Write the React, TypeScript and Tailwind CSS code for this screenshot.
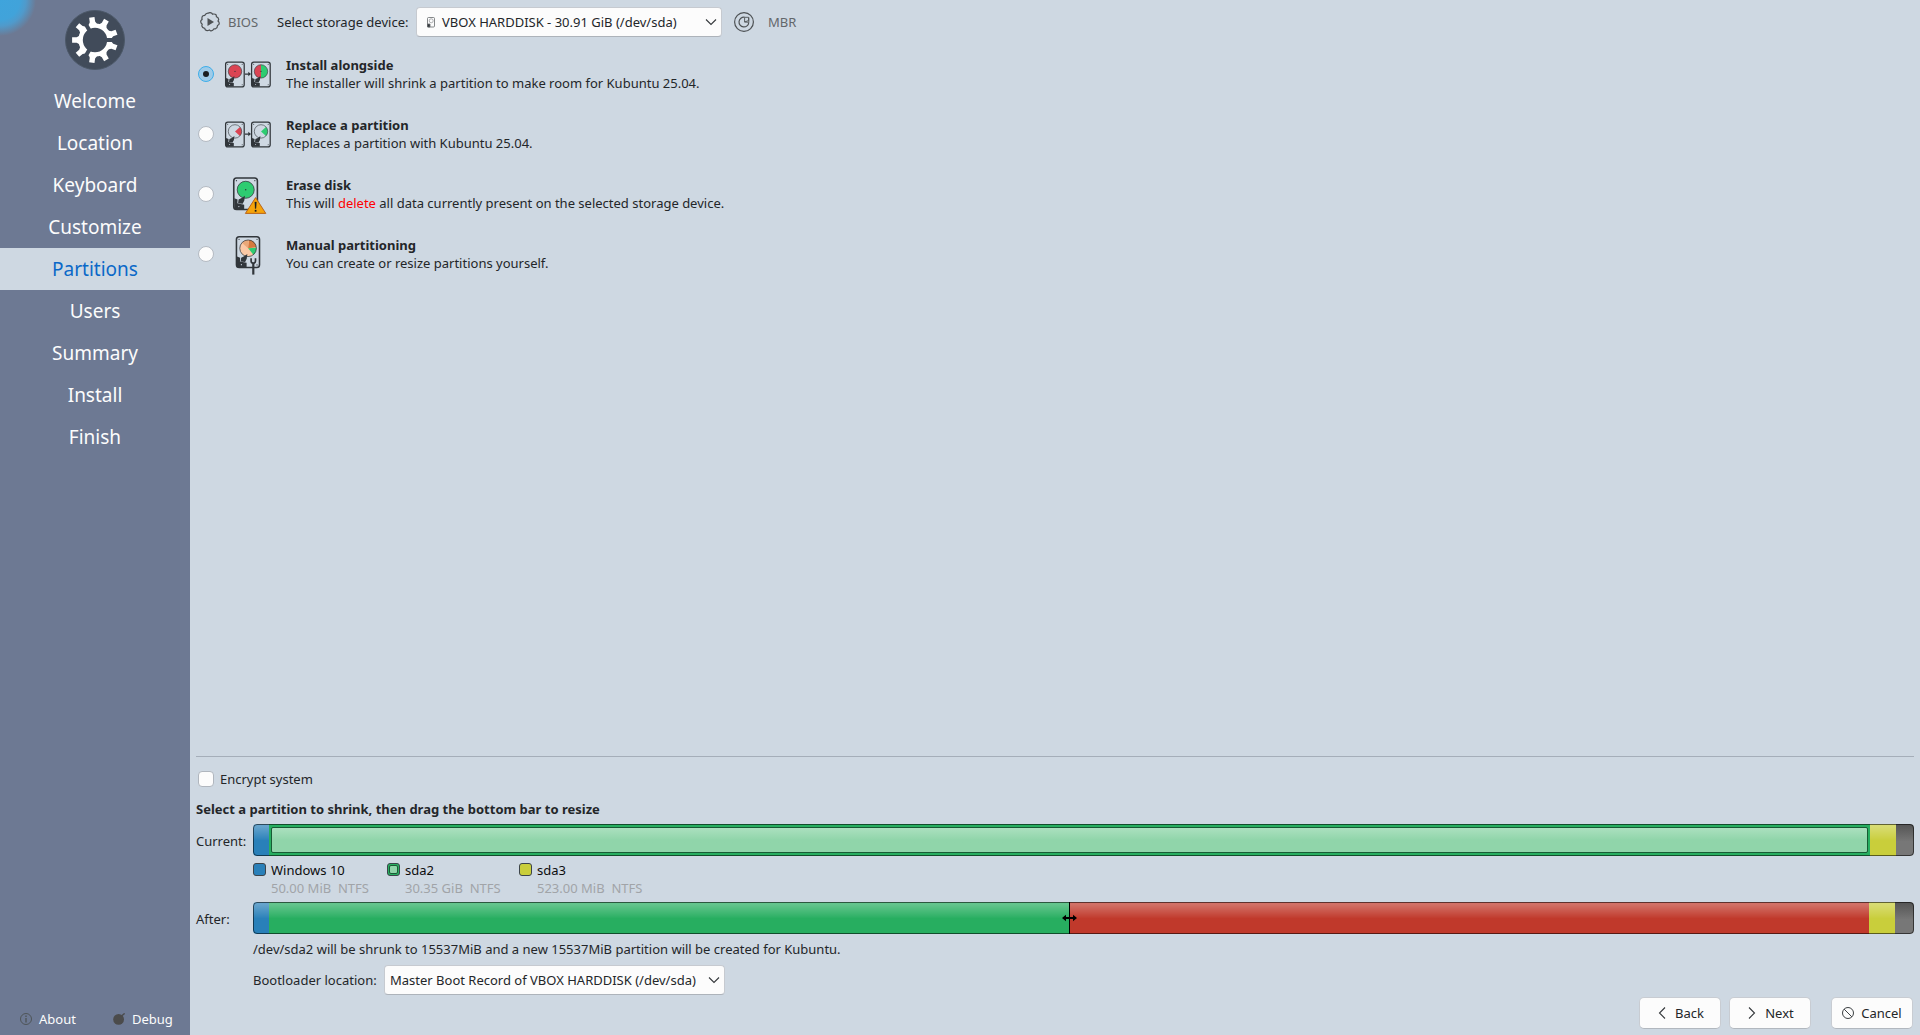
import React from "react";

const INK = "#31363b";

/* Hard disk body with its read arm; the platter is passed as children. */
function Disk({ x, y, s = 1, children }: { x: number; y: number; s?: number; children: React.ReactNode }) {
  return (
    <g transform={`translate(${x} ${y}) scale(${s})`}>
      <rect x="0.6" y="0.6" width="18.6" height="24.8" rx="2.2" fill="none" stroke={INK} strokeWidth="1.25" />
      <circle cx="2.7" cy="2.7" r="0.5" fill={INK} />
      <circle cx="17.2" cy="2.7" r="0.5" fill={INK} />
      <circle cx="17.2" cy="23.3" r="0.5" fill={INK} />
      {children}
      <circle cx="10" cy="9.9" r="6.7" fill="none" stroke={INK} strokeWidth="0.6" />
      <path d="M1 16.5 L3.6 17.5 L3.4 20.5 L8.8 21.6 V25 H1 Z" fill={INK} />
      <path d="M9.4 14.6 L8.9 18.4 L7.6 21 L4 20.6 L4.4 17.6 L6.8 16.4 Z" fill={INK} />
      <circle cx="4.6" cy="23.1" r="0.5" fill="#ced8e2" />
    </g>
  );
}

function Arrow() {
  return <path d="M21 23.5 H24.3 V21.7 L27 24 L24.3 26.3 V24.7 H21 Z" fill={INK} />;
}

function AlongsideIcon() {
  return (
    <svg width="48" height="48" viewBox="0 0 48 48">
      <Disk x={1} y={11.5}>
        <circle cx="10" cy="9.9" r="6.7" fill="#da4453" />
        <circle cx="10" cy="9.9" r="0.6" fill={INK} />
      </Disk>
      <Arrow />
      <Disk x={27} y={11.5}>
        <path d="M10 3.2 A6.7 6.7 0 0 0 10 16.6 Z" fill="#da4453" />
        <path d="M10 3.2 A6.7 6.7 0 0 1 10 16.6 Z" fill="#2ecc71" />
        <circle cx="10" cy="9.9" r="0.6" fill={INK} />
      </Disk>
    </svg>
  );
}

function ReplaceIcon() {
  return (
    <svg width="48" height="48" viewBox="0 0 48 48">
      <Disk x={1} y={11.5}>
        <path d="M10 9.9 L15 5.4 A6.7 6.7 0 0 1 15 14.4 Z" fill="#da4453" />
      </Disk>
      <Arrow />
      <Disk x={27} y={11.5}>
        <path d="M10 9.9 L15 5.4 A6.7 6.7 0 0 1 15 14.4 Z" fill="#2ecc71" />
      </Disk>
    </svg>
  );
}

function EraseIcon() {
  return (
    <svg width="48" height="48" viewBox="0 0 48 48">
      <Disk x={9} y={7.2} s={1.27}>
        <circle cx="10" cy="9.9" r="6.7" fill="#2ecc71" />
        <circle cx="10" cy="9.9" r="0.6" fill={INK} />
      </Disk>
      <path d="M31.6 27.6 L41.8 43.4 H21.4 Z" fill="#f6a40a" stroke="#b35a10" strokeWidth="0.9" strokeLinejoin="round" />
      <path d="M30.8 32 H32.4 L32 38.5 H31.2 Z M30.9 40 H32.3 V41.5 H30.9 Z" fill="#1b1e20" stroke="#1b1e20" strokeWidth="0.3" />
    </svg>
  );
}

function ManualIcon() {
  return (
    <svg width="48" height="48" viewBox="0 0 48 48">
      <Disk x={11.7} y={6} s={1.24}>
        <circle cx="10" cy="9.9" r="6.7" fill="#fbc9a5" />
        <path d="M10 9.9 L5 5.4 A6.7 6.7 0 0 1 10.5 3.2 Z" fill="#e9a878" />
        <path d="M10 9.9 L10.8 3.2 A6.7 6.7 0 0 1 16.6 9 Z" fill="#d5793d" />
        <path d="M10 9.9 L16.7 9.4 A6.7 6.7 0 0 1 14.3 15.1 Z" fill="#2ecc71" />
      </Disk>
      <path d="M27.1 28.3 V31 Q27.1 33.2 29.3 33.2 Q31.5 33.2 31.5 31 V28.3" fill="none" stroke={INK} strokeWidth="1.7" />
      <path d="M29.3 33 V44.6" stroke={INK} strokeWidth="2.2" />
    </svg>
  );
}

const teeth = [-98, -60, -20, 20, 60, 98, 140, 180, 220];

function Logo() {
  return (
    <svg width="60" height="60" viewBox="0 0 60 60">
      <circle cx="30" cy="30" r="29.5" fill="#414b5a" stroke="#4c5868" strokeWidth="1" />
      <circle cx="30" cy="30" r="14.4" fill="none" stroke="#fff" strokeWidth="4.4" />
      {teeth.map((a) => (
        <path key={a} transform={`rotate(${a} 30 30)`} d="M45 25.4 L48.4 27.3 L52.9 27.3 V32.7 L48.4 32.7 L45 34.6 Z" fill="#fff" />
      ))}
      {[0, 120, 240].map((a) => (
        <path key={a} transform={`rotate(${a} 30 30)`} d="M41 28 H50 V32 H41 Z" fill="#414b5a" />
      ))}
    </svg>
  );
}

function Chevron({ d, w = 12 }: { d: string; w?: number }) {
  return (
    <svg width={w} height="12" viewBox={`0 0 ${w} 12`} fill="none" stroke="#34383b" strokeWidth="1.1">
      <path d={d} />
    </svg>
  );
}

const steps = ["Welcome", "Location", "Keyboard", "Customize", "Partitions", "Users", "Summary", "Install", "Finish"];

function Sidebar() {
  return (
    <aside className="relative flex w-[190px] shrink-0 flex-col overflow-hidden bg-[#6d7993] text-[#fcfcfc]">
      <div className="absolute -left-[36px] -top-[36px] h-[72px] w-[72px] rounded-full bg-[radial-gradient(closest-side,#3fa4dc_0%,#41a3da_55%,#509acb_72%,#6d799300_100%)]" />
      <div className="flex h-20 justify-center pt-[10px]"><Logo /></div>
      <nav className="flex flex-col text-[19px]">
        {steps.map((s) => (
          <div
            key={s}
            className={s === "Partitions"
              ? "flex h-[42px] items-center justify-center bg-[#ced8e2] text-[#0a68c8]"
              : "flex h-[42px] items-center justify-center"}
          >
            {s}
          </div>
        ))}
      </nav>
      <div className="mt-auto flex h-8 items-center pb-px">
        <svg className="ml-5 shrink-0" width="12" height="12" viewBox="0 0 12 12" fill="none" stroke="#4f5558">
          <circle cx="6" cy="6" r="5.5" />
          <path d="M6 5v4.5M6 2.5v1.4" strokeWidth="1.4" />
        </svg>
        <span className="ml-[7px] w-[74px]">About</span>
        <svg className="shrink-0" width="12" height="12" viewBox="0 0 12 12">
          <circle cx="5.6" cy="6.4" r="5.4" fill="#4b4b4b" />
          <path d="M8 3.5 L11.6 0.4" stroke="#4b4b4b" strokeWidth="1.4" />
        </svg>
        <span className="ml-[7px]">Debug</span>
      </div>
    </aside>
  );
}

function Toolbar() {
  return (
    <div className="flex h-11 items-center pl-[10px]">
      <svg width="20" height="20" viewBox="0 0 20 20" fill="none" stroke="#4d5154" strokeWidth="1.2">
        <path d="M8.2 1.2 Q10 0 11.8 1.2 L12.5 2.2 Q15 1.6 16.2 3 L16.4 4.6 Q18.7 5.5 18.7 7.6 L18 9 Q19.8 10.5 18.9 12.4 L17.5 13.5 Q17.5 16 15.5 16.8 L14 16.8 Q12.7 19.3 10.5 18.8 L9.3 18 Q7 19.4 5.3 17.8 L4.7 16.3 Q2.2 16 1.8 13.9 L2.2 12.3 Q0.2 10.7 0.9 8.7 L2.1 7.5 Q1.4 5 3 3.7 L4.7 3.4 Q6 1 8.2 1.2 Z" />
        <path d="M7.5 6 V14 L14 10 Z" fill="#4d5154" stroke="none" />
      </svg>
      <span className="ml-[8px] w-[49px] text-[#63676b]">BIOS</span>
      <span className="w-[132px] whitespace-nowrap">Select storage device:</span>
      <div className="ml-[7px] flex h-[30px] w-[306px] items-center rounded-[4px] border border-[#c6cad0] border-b-[#adb3ba] bg-[#fcfcfc] pl-[10px]">
        <svg width="8" height="11" viewBox="0 0 8 11" fill="none" stroke="#66696c" strokeWidth="0.8">
          <rect x="0.5" y="0.5" width="7" height="9.5" rx="1" />
          <circle cx="4.2" cy="3.8" r="2" strokeWidth="0.5" />
          <path d="M0.5 7 H3 V10 H0.5 Z" fill="#31363b" />
        </svg>
        <span className="ml-[7px] grow">VBOX HARDDISK - 30.91 GiB (/dev/sda)</span>
        <span className="mr-1"><Chevron d="M1 3.5 L6 8.5 L11 3.5" /></span>
      </div>
      <svg className="ml-[12px]" width="20" height="20" viewBox="0 0 20 20" fill="none" stroke="#4d5154" strokeWidth="1.2">
        <circle cx="10" cy="10" r="9.4" />
        <path d="M10.5 5.2 A4.9 4.9 0 1 0 14.8 10.5" />
        <path d="M10.6 10 V5.3 H14.6 V8.5 L10.6 10 Z M10.6 10 L14.8 10.3 V5.5" strokeWidth="0.9" />
      </svg>
      <span className="ml-[14px] text-[#63676b]">MBR</span>
    </div>
  );
}

const options: { title: string; body: React.ReactNode; icon: React.ReactNode; on?: boolean }[] = [
  { title: "Install alongside", body: "The installer will shrink a partition to make room for Kubuntu 25.04.", icon: <AlongsideIcon />, on: true },
  { title: "Replace a partition", body: "Replaces a partition with Kubuntu 25.04.", icon: <ReplaceIcon /> },
  {
    title: "Erase disk",
    body: <>This will <span className="text-[#ff0000]">delete</span> all data currently present on the selected storage device.</>,
    icon: <EraseIcon />,
  },
  { title: "Manual partitioning", body: "You can create or resize partitions yourself.", icon: <ManualIcon /> },
];

function Options() {
  return (
    <div className="flex flex-col">
      {options.map((o) => (
        <div key={o.title} className="flex h-[60px] items-center pl-2">
          <span
            className={o.on
              ? "flex size-4 items-center justify-center rounded-full border border-[#3daee9] bg-[#9fcbe8]"
              : "size-4 rounded-full border border-[#b4bac2] bg-[#fcfcfc]"}
          >
            {o.on && <span className="size-[6px] rounded-full bg-[#1b1e20]" />}
          </span>
          <span className="ml-[10px]">{o.icon}</span>
          <div className="ml-[14px] leading-[18px]">
            <div className="font-bold">{o.title}</div>
            <div>{o.body}</div>
          </div>
        </div>
      ))}
    </div>
  );
}

const gloss = "bg-linear-to-b from-white/28 from-8% via-white/5 via-45% to-transparent to-52%";

function Tail({ yellow, grey }: { yellow: string; grey: string }) {
  return (
    <>
      <div className={yellow}><div className={"h-full " + gloss} /></div>
      <div className={grey} />
    </>
  );
}

function CurrentBar() {
  return (
    <div className="relative flex h-8 w-[1661px] overflow-hidden rounded-[4px]">
      <div className="w-4 bg-[#2980b9]"><div className={"h-full " + gloss} /></div>
      <div className="grow bg-[#27ae60] px-[2px] py-[3px]">
        <div className="h-[26px] rounded-[2px] border border-[#175c34] bg-linear-to-b from-[#abe0bf] to-[#90d5aa] to-50%" />
      </div>
      <Tail yellow="w-[26px] bg-[#c9ce3b]" grey="w-[18px] bg-linear-to-b from-[#545454] to-[#777777] to-55%" />
      <div className="absolute inset-0 rounded-[4px] border border-black/55" />
    </div>
  );
}

function AfterBar() {
  return (
    <div className="relative flex h-8 w-[1661px] overflow-hidden rounded-[4px]">
      <div className="w-4 bg-[#2980b9]"><div className={"h-full " + gloss} /></div>
      <div className="w-[800px] bg-[#27ae60]"><div className={"h-full " + gloss} /></div>
      <div className="w-px bg-black" />
      <div className="grow bg-[#c0392b]"><div className={"h-full " + gloss} /></div>
      <Tail yellow="w-[26px] bg-[#c9ce3b]" grey="w-[19px] bg-linear-to-b from-[#545454] to-[#777777] to-55%" />
      <div className="absolute inset-0 rounded-[4px] border border-black/55" />
      <svg className="absolute left-[809px] top-[12px]" width="15" height="8" viewBox="0 0 15 8">
        <path d="M0 4 L4 0.8 V3 H11 V0.8 L15 4 L11 7.2 V5 H4 V7.2 Z" fill="#000" />
      </svg>
    </div>
  );
}

const legend = [
  { name: "Windows 10", size: "50.00 MiB  NTFS", box: "bg-[#2980b9]", w: "w-[134px]" },
  { name: "sda2", size: "30.35 GiB  NTFS", box: "bg-[#27ae60]", w: "w-[132px]", inner: true },
  { name: "sda3", size: "523.00 MiB  NTFS", box: "bg-[#c9ce3b]", w: "w-[140px]" },
];

function Legend() {
  return (
    <div className="flex h-[46px] pl-[57px] pt-[5px]">
      {legend.map((l) => (
        <div key={l.name} className={"flex shrink-0 " + l.w}>
          <div className={"mt-[2px] flex size-[13px] items-center justify-center rounded-[3px] border border-[#3c444b] " + l.box}>
            {l.inner && <div className="size-[9px] shrink-0 rounded-[2px] border border-[#175c34] bg-[#90d5aa]" />}
          </div>
          <div className="ml-[5px] whitespace-pre leading-[18px]">
            <div className="text-[#0c0d0e]">{l.name}</div>
            <div className="text-[#a1a4a8]">{l.size}</div>
          </div>
        </div>
      ))}
    </div>
  );
}

function Button({ label, icon }: { label: string; icon: React.ReactNode }) {
  return (
    <button className="flex h-8 w-[82px] items-center justify-center gap-[7px] rounded-[5px] border border-[#c8ccd2] border-b-[#b2b8bf] bg-[#fcfcfc]">
      {icon}
      <span>{label}</span>
    </button>
  );
}

export default function App() {
  return (
    <div className="flex h-[1035px] w-[1920px] overflow-hidden bg-[#ced8e2] font-['Noto_Sans',sans-serif] text-[13px] leading-[18px] text-[#232629]">
      <Sidebar />
      <main className="flex grow flex-col">
        <Toolbar />
        <Options />
        <div className="mt-auto flex flex-col pl-[6px]">
          <div className="h-px w-[1718px] bg-[#a5aeb9]" />
          <label className="mt-[14px] flex h-4 items-center pl-[2px]">
            <span className="size-4 rounded-[4px] border border-[#b0b6be] bg-[#fcfcfc]" />
            <span className="ml-[6px]">Encrypt system</span>
          </label>
          <div className="mt-[13px] h-6 font-bold">Select a partition to shrink, then drag the bottom bar to resize</div>
          <div className="flex items-center">
            <span className="w-[57px] pt-[2px]">Current:</span>
            <CurrentBar />
          </div>
          <Legend />
          <div className="flex items-center">
            <span className="w-[57px] pt-[2px]">After:</span>
            <AfterBar />
          </div>
          <div className="mt-[6px] pl-[57px]">/dev/sda2 will be shrunk to 15537MiB and a new 15537MiB partition will be created for Kubuntu.</div>
          <div className="mt-[7px] flex h-[30px] items-center pl-[57px]">
            <span className="w-[123px] whitespace-nowrap">Bootloader location:</span>
            <div className="ml-2 flex h-[30px] w-[341px] items-center rounded-[4px] border border-[#c6cad0] border-b-[#adb3ba] bg-[#fcfcfc] pl-[5px]">
              <span className="grow">Master Boot Record of VBOX HARDDISK (/dev/sda)</span>
              <span className="mr-1"><Chevron d="M1 3.5 L6 8.5 L11 3.5" /></span>
            </div>
          </div>
          <div className="mt-[2px] flex h-[38px] justify-end pr-[7px]">
            <Button label="Back" icon={<Chevron d="M9 0.5 L3.5 6 L9 11.5" />} />
            <span className="w-2" />
            <Button label="Next" icon={<Chevron d="M3 0.5 L8.5 6 L3 11.5" />} />
            <span className="w-5" />
            <Button
              label="Cancel"
              icon={
                <svg width="12" height="12" viewBox="0 0 12 12" fill="none" stroke="#3c4043" strokeWidth="1">
                  <circle cx="6" cy="6" r="5.5" />
                  <path d="M2.1 2.1 L9.9 9.9" />
                </svg>
              }
            />
          </div>
        </div>
      </main>
    </div>
  );
}
